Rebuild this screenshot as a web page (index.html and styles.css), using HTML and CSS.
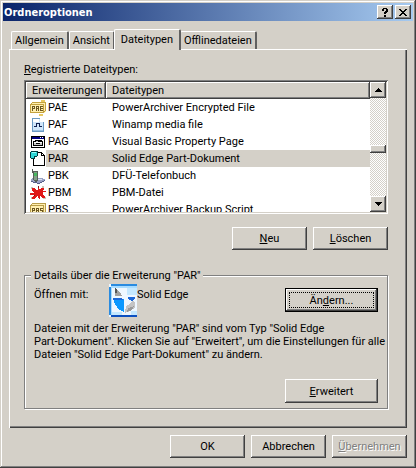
FILE: index.html
```html
<!DOCTYPE html>
<html lang="de">
<head>
    <meta charset="UTF-8">
    <meta name="viewport" content="width=device-width, initial-scale=1.0">
    <title>Ordneroptionen</title>
    <link rel="stylesheet" href="styles.css">
</head>
<body>
    <div class="dialog">
        <header class="title-bar">
            <h1>Ordneroptionen</h1>
            <button class="caption-btn" aria-label="Hilfe">
                <svg width="8" height="9" viewBox="0 0 8 9"><path d="M1 1h1V0h4v1h1v3H6v1H5v1H3V4h1V3h1V1H3v2H1zM3 7h2v2H3z"/></svg>
            </button>
            <button class="caption-btn" aria-label="Schließen">
                <svg width="8" height="7" viewBox="0 0 8 7"><path d="M0 0h2v1h1v1h2V1h1V0h2v1H7v1H6v1H5v1h1v1h1v1h1v1H6V6H5V5H3v1H2v1H0V6h1V5h1V4h1V3H2V2H1V1H0z"/></svg>
            </button>
        </header>

        <div class="tabs" role="tablist">
            <button class="tab" role="tab">Allgemein</button>
            <button class="tab" role="tab">Ansicht</button>
            <button class="tab active" role="tab" aria-selected="true">Dateitypen</button>
            <button class="tab" role="tab">Offlinedateien</button>
        </div>

        <main class="panel" role="tabpanel">
            <div class="list-label" id="types-label"><u>R</u>egistrierte Dateitypen:</div>

            <div class="list-box">
                <div class="list-view">
                    <table aria-labelledby="types-label">
                        <thead>
                            <tr><th class="col-ext">Erweiterungen</th><th>Dateitypen</th></tr>
                        </thead>
                        <tbody>
                            <tr>
                                <td><span class="ext"><svg width="16" height="16" viewBox="0 0 16 16"><path fill="#e8c860" d="M11 0h4v2h-4zM9 14h4v2H9z"/><path fill="#ffefaf" d="M0 4l2-2h14v9l-2 2H0z"/><path fill="none" stroke="#c4a23f" d="M.5 13V4.500l2-2h13v8l-2 2H0M1 4.500h12.500V12"/><path fill="none" stroke="#6b5620" d="M2.500 11V6.500h2v2h-2M6.500 11V6.500h2V11M6.500 8.500h2M13 6.500h-2.500v4H13M10.500 8.500H13"/></svg><span>PAE</span></span></td>
                                <td>PowerArchiver Encrypted File</td>
                            </tr>
                            <tr>
                                <td><span class="ext"><svg width="16" height="16" viewBox="0 0 16 16"><path fill="#d0e6fa" stroke="#6b9ac4" d="M2.500 1.500h8l3 3v10h-11z"/><path fill="#fff" d="M3 2h6v3H3zM10 1v4h4z"/><path fill="#98c0e4" d="M3 13h10v1H3z"/><path fill="none" stroke="#102050" d="M4 9.500h2.500v-3h3v3H12"/></svg><span>PAF</span></span></td>
                                <td>Winamp media file</td>
                            </tr>
                            <tr>
                                <td><span class="ext"><svg width="16" height="16" viewBox="0 0 16 16"><path fill="#000" d="M1 2h14v12H1z"/><path fill="#000080" d="M2 3h12v2H2z"/><path fill="#fff" d="M2 5h12v8H2zM10 3h1v1h-1zM12 3h1v1h-1z"/><path fill="#c8c8c8" stroke="#000" d="M3.500 7.500h2v-1h3v1h4v4h-9z"/><path fill="#fff" d="M4 8h8v1H4z"/><path d="M9 6h3v1H9zM6 9h4v1H6z"/></svg><span>PAG</span></span></td>
                                <td>Visual Basic Property Page</td>
                            </tr>
                            <tr class="selected">
                                <td><span class="ext"><svg width="16" height="16" viewBox="0 0 16 16"><path fill="#fff" stroke="#000" d="M3.500 1.500h8l3 3v10h-11z"/><path fill="none" stroke="#000" d="M11.500 1v3.500H15"/><path fill="#30d8d8" stroke="#003c40" d="M.5 1.500l1-1h6v4l-1 1h-2v2h-3l-1-1z"/><path fill="#a0ffff" d="M2 1h4v1H2z"/></svg><span>PAR</span></span></td>
                                <td>Solid Edge Part-Dokument</td>
                            </tr>
                            <tr>
                                <td><span class="ext"><svg width="16" height="16" viewBox="0 0 16 16"><path fill="#9aa2c4" d="M1 11l4-2 10 2v2l-6 3-8-3z"/><path fill="#586088" d="M1 13l8 2 6-3v1l-6 3-8-2z"/><path fill="#dce0f0" d="M8 11h4v1H8z"/><path fill="#586058" d="M2 1h1v4H2zM3 3h5v10l-2 1-3-2z"/><path fill="#82a088" d="M4 4h3v8H4z"/><path fill="#48b860" d="M4 5h3v3H4z"/></svg><span>PBK</span></span></td>
                                <td>DFÜ-Telefonbuch</td>
                            </tr>
                            <tr>
                                <td><span class="ext"><svg width="16" height="16" viewBox="0 0 16 16"><path fill="#c8c8b8" d="M1 2h2v2H1zM12 1h2v2h-2zM1 12h2v2H1zM13 12h3v2h-3z"/><path fill="#e01818" d="M8 1h1v3h2V3h3v1l-2 2h4v1h-3v3l2 1v2h-2l-3-2v3H9l-1-3-4 3H2v-2l3-2H0V8h4L2 5V3h2l2 2h2z"/><path fill="#801818" d="M8 1h1v2H8zM4 10h1v1H4z"/></svg><span>PBM</span></span></td>
                                <td>PBM-Datei</td>
                            </tr>
                            <tr>
                                <td><span class="ext"><svg width="16" height="16" viewBox="0 0 16 16"><path fill="#ffefaf" stroke="#b89c48" d="M.5 3.500l2-2h13v11l-2 2H.5z"/><path fill="none" stroke="#b89c48" d="M1 3.500h12.500V14"/><path fill="none" stroke="#6b5620" d="M2.500 11V6.500h2v2h-2M6.500 6.500h2v4h-2zM6.500 8.500h2M13 6.500h-2.500v2h2v2H10"/></svg><span>PBS</span></span></td>
                                <td>PowerArchiver Backup Script</td>
                            </tr>
                        </tbody>
                    </table>
                </div>
                <div class="scrollbar">
                    <button class="scroll-btn" aria-label="Nach oben"><svg width="7" height="4" viewBox="0 0 7 4"><path d="M3 0h1v1h1v1h1v1h1v1H0V3h1V2h1V1h1z"/></svg></button>
                    <div class="scroll-track"><div class="scroll-thumb"></div></div>
                    <button class="scroll-btn" aria-label="Nach unten"><svg width="7" height="4" viewBox="0 0 7 4"><path d="M0 0h7v1H6v1H5v1H4v1H3V3H2V2H1V1H0z"/></svg></button>
                </div>
            </div>

            <div class="button-row">
                <button class="btn"><u>N</u>eu</button>
                <button class="btn"><u>L</u>öschen</button>
            </div>

            <fieldset class="details">
                <legend>Details über die Erweiterung "PAR"</legend>
                <div class="open-with">
                    <span class="open-label">Öffnen mit:</span>
                    <svg class="app-icon" width="28" height="33" viewBox="0 0 28 33"><path fill="#eef7ff" d="M0 0h28v33H0z"/><path fill="#2a8be0" d="M0 3h2v28H0zM2 0h26v2H2z"/><path fill="#a8dcff" d="M2 2h26v2H2zM2 4h1v27H2z"/><path fill="#0c50c0" d="M2 31h26v2H2z"/><path fill="#c4e8ff" d="M3 28h10v3H3zM18 4h10v7H18zM22 27h6v4h-6z"/><path fill="#a0a0a0" d="M6 4l5 4 2 4H6z"/><path fill="#555" d="M6 4l2 2v3H6z"/><path fill="#0a98ff" d="M5 15h10v13l-6-3-4-7z"/><path fill="#1c68d8" d="M4 14h8l3 2H4zM19 13h7v2l-3 2-4-2z"/><path fill="#c4c4c4" d="M17 22l4-2 2-3 3 1v6l-5 3-5 2z"/><path fill="#999" d="M19 24l6-2-2 4-5 2z"/></svg>
                    <span class="app-name">Solid Edge</span>
                    <button class="btn wide default">Än<u>d</u>ern...</button>
                </div>
                <p>Dateien mit der Erweiterung "PAR" sind vom Typ "Solid Edge <span class="file-type">Part-Dokument".</span> Klicken Sie auf "Erweitert", um die Einstellungen für alle Dateien "Solid Edge Part-Dokument" zu ändern.</p>
                <div class="advanced">
                    <button class="btn wide"><u>E</u>rweitert</button>
                </div>
            </fieldset>
        </main>

        <footer class="button-row">
            <button class="btn">OK</button>
            <button class="btn">Abbrechen</button>
            <button class="btn" disabled><u>Ü</u>bernehmen</button>
        </footer>
    </div>
</body>
</html>
```
FILE: styles.css
```css
* {
    box-sizing: border-box;
}

body {
    margin: 0;
    background: #d4d0c8;
    color: #000;
    font-family: Roboto, "Liberation Sans", Arial, sans-serif;
    font-size: 11px;
    line-height: 13px;
}

button {
    font: inherit;
    color: inherit;
    background: #d4d0c8;
    border: none;
    padding: 0;
}

svg {
    display: block;
    flex: none;
    shape-rendering: crispEdges;
}

u {
    text-underline-offset: 1px;
}

.dialog {
    display: flex;
    flex-direction: column;
    min-height: 100vh;
    padding: 3px;
    box-shadow: inset -1px -1px #404040, inset 1px 1px #d4d0c8, inset -2px -2px #808080, inset 2px 2px #fff;
}

.title-bar {
    display: flex;
    align-items: center;
    gap: 2px;
    height: 18px;
    padding: 0 2px 0 1px;
    background: linear-gradient(to right, #0a246a, #a6caf0);
}

.title-bar h1 {
    flex: 1;
    margin: 0;
    color: #fff;
    font-family: "DejaVu Sans Condensed", "Noto Sans", sans-serif;
    font-size: 11px;
    font-weight: bold;
}

.caption-btn,
.scroll-btn,
.scroll-thumb,
.btn {
    display: flex;
    align-items: center;
    justify-content: center;
    background: #d4d0c8;
    box-shadow: inset -1px -1px #404040, inset 1px 1px #fff, inset -2px -2px #808080;
}

.caption-btn {
    width: 16px;
    height: 14px;
}

.tabs {
    display: flex;
    align-items: flex-end;
    height: 28px;
    padding-left: 8px;
}

.tab {
    height: 18px;
    padding: 0 3px;
    border: 1px solid #fff;
    border-right: 2px solid #606060;
    border-bottom: none;
    border-radius: 2px 2px 0 0;
}

.tab.active {
    position: relative;
    height: 21px;
    margin: 0 -1px -1px;
    padding: 0 6px 2px;
}

.panel {
    flex: 1;
    margin: 0 6px;
    padding: 13px 19px 17px 14px;
    border-top: 1px solid #fff;
    border-left: 1px solid #fff;
    box-shadow: inset -1px -1px #404040, inset -2px -2px #808080;
}

.list-box {
    display: flex;
    height: 134px;
    margin-top: 4px;
    padding: 2px;
    background: #fff;
    box-shadow: inset 1px 1px #808080, inset -1px -1px #fff, inset 2px 2px #404040, inset -2px -2px #d4d0c8;
}

.list-view {
    flex: 1;
    overflow: hidden;
}

table {
    width: 100%;
    border-collapse: separate;
    border-spacing: 0;
    table-layout: fixed;
}

th,
td {
    height: 17px;
    padding: 0 6px;
    text-align: left;
    font-weight: normal;
    white-space: nowrap;
}

th {
    background: #d4d0c8;
    box-shadow: inset -1px -1px #404040, inset 1px 1px #fff, inset -2px -2px #808080;
}

td:first-child {
    padding: 0 0 0 4px;
}

.col-ext {
    width: 80px;
}

.ext {
    display: flex;
    align-items: center;
}

.ext span {
    flex: 1;
    padding: 2px;
}

.selected td + td,
.selected .ext span {
    background: #d4d0c8;
}

.scrollbar {
    display: flex;
    flex-direction: column;
    width: 16px;
}

.scroll-btn {
    height: 16px;
}

.scroll-track {
    display: flex;
    flex-direction: column;
    flex: 1;
    padding-top: 47px;
    background: repeating-conic-gradient(#fff 0 25%, #d4d0c8 0 50%) 0 0 / 2px 2px;
}

.scroll-thumb {
    height: 8px;
}

.button-row {
    display: flex;
    justify-content: flex-end;
    gap: 6px;
}

.panel .button-row {
    margin-top: 13px;
}

.btn {
    display: block;
    width: 75px;
    height: 23px;
    text-align: center;
}

.btn.wide {
    width: 93px;
    height: 24px;
}

.btn.default {
    border: 1px solid #000;
    outline: 1px dotted #000;
    outline-offset: -5px;
}

.btn:disabled {
    color: #808080;
    text-shadow: 1px 1px #fff;
}

.details {
    margin: 19px 0 0;
    padding: 2px 0 5px 9px;
    border: 1px solid #808080;
    box-shadow: inset 1px 1px #fff, 1px 1px #fff;
}

.details legend {
    margin-left: -3px;
    padding: 0 2px 0 3px;
    background: #d4d0c8;
}

.open-with {
    display: flex;
    align-items: flex-start;
    padding-right: 9px;
}

.open-label {
    width: 75px;
    padding-top: 4px;
}

.app-name {
    flex: 1;
    padding-top: 4px;
}

.open-with .btn {
    margin-top: 4px;
}

.details p {
    margin: 5px 0 18px;
}

.file-type {
    white-space: nowrap;
}

.advanced {
    display: flex;
    justify-content: flex-end;
    padding-right: 9px;
}

footer {
    margin: 7px 6px;
}
```
